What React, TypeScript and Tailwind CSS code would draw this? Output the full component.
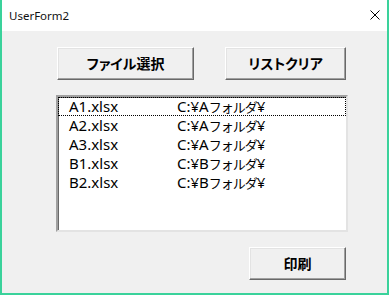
import React from 'react';

interface FileRow {
  name: string;
  drive: string;
  folder: string;
}

const rows: FileRow[] = [
  { name: 'A1.xlsx', drive: 'C:¥A', folder: 'フォルダ' },
  { name: 'A2.xlsx', drive: 'C:¥A', folder: 'フォルダ' },
  { name: 'A3.xlsx', drive: 'C:¥A', folder: 'フォルダ' },
  { name: 'B1.xlsx', drive: 'C:¥B', folder: 'フォルダ' },
  { name: 'B2.xlsx', drive: 'C:¥B', folder: 'フォルダ' },
];

const FormButton: React.FC<{ label: string; className?: string }> = ({ label, className }) => (
  <button
    className={`h-[33px] bg-[#f0f0f0] border-t border-l border-t-white border-l-white border-b border-r border-b-[#696969] border-r-[#696969] shadow-[inset_-1px_-1px_0_#a0a0a0,inset_1px_1px_0_#e3e3e3] flex items-center justify-center text-[14px] font-bold text-black [font-family:'Noto_Sans_CJK_JP',sans-serif] [font-feature-settings:'palt'] ${className ?? ''}`}
  >
    {label}
  </button>
);

export default function App() {
  return (
    <div className="w-[389px] h-[295px] flex bg-[#3ad29b] px-[2px] pb-[2px] [font-family:'Noto_Sans','Noto_Sans_CJK_JP',sans-serif]">
      <div className="flex-1 flex flex-col bg-white">
        {/* Title bar */}
        <div className="h-[31px] flex items-center justify-between bg-white pl-[7px] pr-[7px]">
          <span className="text-[11.5px] text-[#111]">UserForm2</span>
          <svg width="10" height="10" viewBox="0 0 10 10" className="mb-[1px]">
            <path d="M0.5 0.5 L9.5 9.5 M9.5 0.5 L0.5 9.5" stroke="#000" strokeWidth="1" />
          </svg>
        </div>

        {/* Body */}
        <div className="flex-1 bg-[#f0f0f0] pl-[54px] pt-[16px]">
          <div className="flex pl-[1px]">
            <FormButton label="ファイル選択" className="w-[137px]" />
            <FormButton label="リストクリア" className="w-[121px] ml-[31px]" />
          </div>

          {/* List box */}
          <div className="mt-[15px] w-[292px] h-[137px] bg-white border-t-2 border-l-2 border-t-[#a0a0a0] border-l-[#a0a0a0] border-b-2 border-r-2 border-b-[#e3e3e3] border-r-[#e3e3e3] shadow-[inset_1px_1px_0_#696969]">
            {rows.map((row, i) => (
              <div
                key={row.name}
                className={`h-[19px] flex items-center text-[15px] text-black ${
                  i === 0 ? 'outline outline-1 outline-dotted outline-black -outline-offset-1' : ''
                }`}
              >
                <span className="w-[108px] pl-[11px] shrink-0">{row.name}</span>
                <span className="pl-[11px] whitespace-nowrap">
                  {row.drive}
                  <span className="text-[13px] tracking-[-1px] [font-family:'Noto_Sans_CJK_JP',sans-serif]">{row.folder}</span>
                  ¥
                </span>
              </div>
            ))}
          </div>

          <div className="mt-[15px] w-[292px] flex justify-end pr-[2px]">
            <FormButton label="印刷" className="w-[97px]" />
          </div>
        </div>
      </div>
    </div>
  );
}
